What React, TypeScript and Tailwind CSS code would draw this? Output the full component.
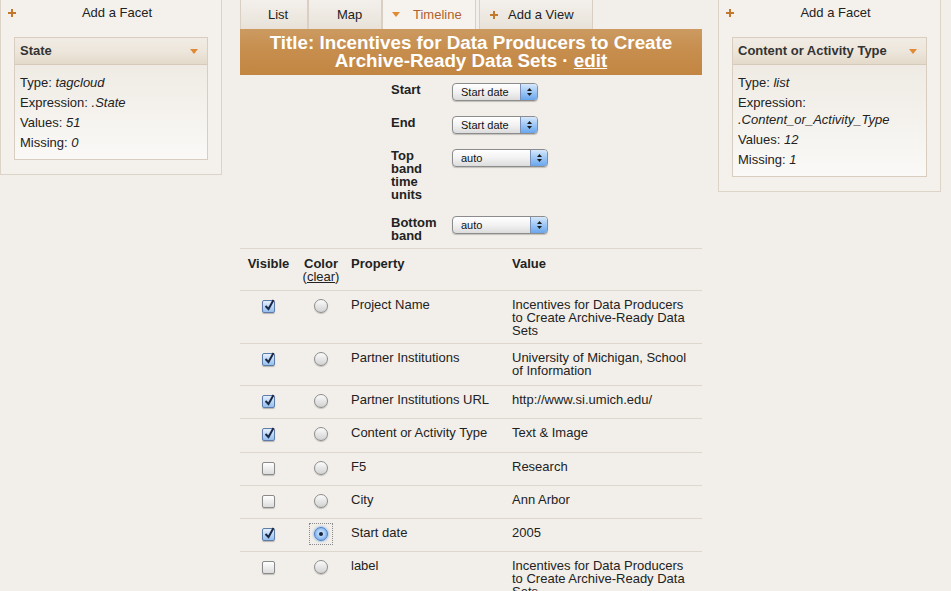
import React from 'react';

const sans = "font-['Liberation_Sans',Arial,Helvetica,sans-serif]";

function Plus() {
  return (
    <svg width="8" height="8" viewBox="0 0 8 8" className="shrink-0">
      <rect x="3" y="0" width="2" height="8" fill="#c4782e" />
      <rect x="0" y="3" width="8" height="2" fill="#c4782e" />
    </svg>
  );
}

function Caret() {
  return (
    <svg width="8" height="5" viewBox="0 0 8 5" className="shrink-0">
      <polygon points="0,0 8,0 4,5" fill="#e08a36" />
    </svg>
  );
}

interface FacetLine {
  label: string;
  value: string;
}

function FacetPanel({ title, lines, className }: { title: string; lines: FacetLine[]; className: string }) {
  return (
    <div className={`${className} shrink-0 border-x border-b border-[#ddd4c8] bg-[#f4f1ec] pt-[5px] pb-[14px]`}>
      <div className="flex items-center pl-[7px] pr-[3px] leading-[15px]">
        <Plus />
        <span className="flex-1 text-center text-[13px] text-[#222]">Add a Facet</span>
      </div>
      <div className="mt-[17px] mx-[13px] border border-[#d8cdbf]">
        <div className="flex h-[27px] items-center justify-between border-b border-[#d6cab9] bg-gradient-to-b from-[#f1ece4] via-[#ede6dc] to-[#e4dacb] pl-[5px] pr-[9px]">
          <span className="text-[13px] font-bold text-[#333]">{title}</span>
          <Caret />
        </div>
        <div className="flex flex-col gap-[3px] bg-gradient-to-b from-[#efebe4] to-[#faf9f7] pl-[5px] pr-[4px] pt-[9px] pb-[8px] text-[13px] leading-[17px] text-[#222]">
          {lines.map((l) => (
            <div key={l.label}>
              {l.label} <i>{l.value}</i>
            </div>
          ))}
        </div>
      </div>
    </div>
  );
}

function Select({ label, wide }: { label: string; wide?: boolean }) {
  return (
    <div
      className={`${wide ? 'w-[96px]' : 'w-[86px]'} flex h-[18px] overflow-hidden rounded-[4px] border border-[#8c8c8c] bg-gradient-to-b from-[#ffffff] via-[#f2f2f2] to-[#dcdcdc] font-normal shadow-[0_1px_1px_rgba(0,0,0,0.2)]`}
    >
      <span className="flex-1 pl-[8px] text-[11px] leading-[16px] text-[#111]">{label}</span>
      <div className="flex w-[17px] items-center justify-center border-l border-[#7b90b8] bg-gradient-to-b from-[#d6e8fc] via-[#9cc6f4] to-[#6aa6ec]">
        <svg width="7" height="10" viewBox="0 0 7 10">
          <polygon points="3.5,1 6,4 1,4" fill="#1c1c1c" />
          <polygon points="1,6 6,6 3.5,9" fill="#1c1c1c" />
        </svg>
      </div>
    </div>
  );
}

function Checkbox({ checked }: { checked: boolean }) {
  if (checked) {
    return (
      <div className="relative h-[13px] w-[13px] rounded-[2px] border border-[#5c7cab] bg-gradient-to-b from-[#e6f0fb] to-[#95bfee] shadow-[0_1px_1px_rgba(0,0,0,0.25)]">
        <svg className="absolute -top-[3px] left-[0px]" width="13" height="14" viewBox="0 0 13 14">
          <path d="M2.5 8 L5.5 11 L10.5 2" stroke="#1b2845" strokeWidth="2" fill="none" />
        </svg>
      </div>
    );
  }
  return (
    <div className="h-[13px] w-[13px] rounded-[2px] border border-[#8a8a8a] bg-gradient-to-b from-[#ffffff] to-[#dcdcdc] shadow-[0_1px_1px_rgba(0,0,0,0.2)]" />
  );
}

function Radio({ selected }: { selected: boolean }) {
  if (selected) {
    return (
      <div className="relative">
        <div className="absolute -left-[5px] -top-[4px] h-[22px] w-[24px] border border-dotted border-[#8a8a8a]" />
        <div className="flex h-[14px] w-[14px] items-center justify-center rounded-full border border-[#4b7fc6] bg-[radial-gradient(circle_at_50%_45%,#e2efff,#5b9be6)] shadow-[0_0_3px_rgba(60,130,220,0.8)]">
          <div className="h-[4px] w-[4px] rounded-full bg-[#15233a]" />
        </div>
      </div>
    );
  }
  return (
    <div className="h-[14px] w-[14px] rounded-full border border-[#8d8d8d] bg-gradient-to-b from-[#fbfbfb] to-[#d2d2d2] shadow-[0_1px_1px_rgba(0,0,0,0.2)]" />
  );
}

const rows = [
  { prop: 'Project Name', value: 'Incentives for Data Producers to Create Archive-Ready Data Sets', checked: true, h: 'h-[53px]' },
  { prop: 'Partner Institutions', value: 'University of Michigan, School of Information', checked: true, h: 'h-[42px]' },
  { prop: 'Partner Institutions URL', value: 'http://www.si.umich.edu/', checked: true, h: 'h-[33px]' },
  { prop: 'Content or Activity Type', value: 'Text & Image', checked: true, h: 'h-[34px]' },
  { prop: 'F5', value: 'Research', checked: false, h: 'h-[33px]' },
  { prop: 'City', value: 'Ann Arbor', checked: false, h: 'h-[33px]' },
  { prop: 'Start date', value: '2005', checked: true, h: 'h-[33px]', selected: true },
  { prop: 'label', value: 'Incentives for Data Producers to Create Archive-Ready Data Sets', checked: false, h: 'h-[53px]' },
];

export default function App() {
  return (
    <div className={`${sans} flex min-h-screen items-start bg-[#f2efea] text-[#222]`}>
      <FacetPanel
        className="w-[222px] border-l"
        title="State"
        lines={[
          { label: 'Type:', value: 'tagcloud' },
          { label: 'Expression:', value: '.State' },
          { label: 'Values:', value: '51' },
          { label: 'Missing:', value: '0' },
        ]}
      />

      <div className="ml-[18px] w-[462px] shrink-0">
        <div className="flex h-[29px] text-[13px]">
          <div className="flex w-[68px] items-center border-x border-[#d9d0c3] bg-gradient-to-b from-[#f3f0eb] to-[#e8e2d9] pl-[27px]">List</div>
          <div className="flex w-[74px] items-center border-x border-[#d9d0c3] bg-gradient-to-b from-[#f3f0eb] to-[#e8e2d9] pl-[28px]">Map</div>
          <div className="flex w-[94px] items-center gap-[13px] border-x border-[#d9d0c3] bg-[#f6f3ef] pl-[9px] text-[#b0612b]">
            <Caret />
            <span>Timeline</span>
          </div>
          <div className="ml-[3px] flex w-[114px] items-center gap-[10px] border-x border-[#d9d0c3] bg-gradient-to-b from-[#f3f0eb] to-[#e8e2d9] pl-[10px]">
            <Plus />
            <span>Add a View</span>
          </div>
        </div>

        <div className="bg-gradient-to-b from-[#cc9a61] via-[#c68d4c] to-[#c38642] px-[20px] pt-[5px] pb-[5px] text-center text-[18.8px] font-bold leading-[18px] text-white">
          Title: Incentives for Data Producers to Create Archive-Ready Data Sets · <span className="underline">edit</span>
        </div>

        <div className="ml-[151px] grid w-fit grid-cols-[55px_auto] gap-x-[6px] gap-y-[15px] pt-[8px] pb-[6px] text-[13px] font-bold leading-[13px]">
          <div>Start</div>
          <Select label="Start date" />
          <div>End</div>
          <Select label="Start date" />
          <div>Top band time units</div>
          <Select label="auto" wide />
          <div>Bottom band</div>
          <Select label="auto" wide />
        </div>

        <div className="border-t border-[#ddd7ce] text-[13px] leading-[13px]">
          <div className="grid h-[42px] grid-cols-[57px_48px_161px_1fr] border-b border-[#ddd7ce] pt-[8px] font-bold">
            <div className="text-center">Visible</div>
            <div className="text-center">
              Color
              <div className="font-normal">
                (<span className="underline">clear</span>)
              </div>
            </div>
            <div className="pl-[6px]">Property</div>
            <div className="pl-[6px]">Value</div>
          </div>
          {rows.map((r) => (
            <div key={r.prop} className={`${r.h} grid grid-cols-[57px_48px_161px_1fr] border-b border-[#ddd7ce]`}>
              <div className="flex justify-center pt-[9px]">
                <Checkbox checked={r.checked} />
              </div>
              <div className="flex justify-center pt-[8px]">
                <Radio selected={!!r.selected} />
              </div>
              <div className="pl-[6px] pt-[7px]">{r.prop}</div>
              <div className="pl-[6px] pr-[6px] pt-[7px]">{r.value}</div>
            </div>
          ))}
        </div>
      </div>

      <FacetPanel
        className="ml-[16px] w-[223px] border-l"
        title="Content or Activity Type"
        lines={[
          { label: 'Type:', value: 'list' },
          { label: 'Expression:', value: '.Content_or_Activity_Type' },
          { label: 'Values:', value: '12' },
          { label: 'Missing:', value: '1' },
        ]}
      />
    </div>
  );
}
